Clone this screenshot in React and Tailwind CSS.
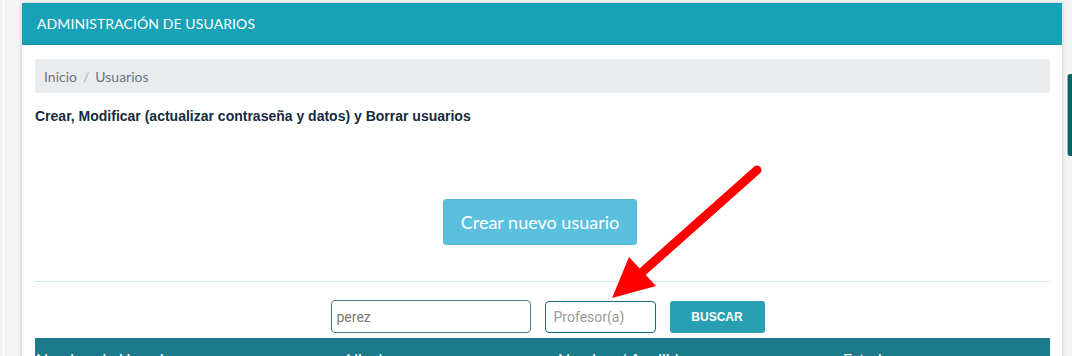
import React from 'react';

const columns = [
  { label: 'Nombre de Usuario', width: 'w-[310px]' },
  { label: 'Nivel', width: 'w-[212px]' },
  { label: 'Nombre / Apellido', width: 'w-[285px]' },
  { label: 'Estado', width: 'flex-1' },
];

const Arrow = () => (
  <svg
    className="absolute left-0 top-0 pointer-events-none"
    width="1072"
    height="356"
    viewBox="0 0 1072 356"
  >
    <line x1="757" y1="170" x2="640" y2="274" stroke="#ff0000" strokeWidth="9" strokeLinecap="round" />
    <polygon points="612,298 629,257 656,286" fill="#ff0000" />
  </svg>
);

const App = () => {
  return (
    <div className="relative h-[356px] w-[1072px] overflow-hidden bg-[#f4f4f4] font-['Lato',sans-serif]">
      <div className="absolute left-[3px] top-0 h-full w-px bg-white" />
      <div className="absolute right-0 top-[74px] h-[82px] w-[5px] rounded-l-[3px] border-l border-[#8fb9b9] bg-[#0b5f63]" />

      <div className="ml-[22px] mt-[3px] w-[1040px] bg-white shadow-[0_0_4px_rgba(0,0,0,0.18)]">
        {/* Card header */}
        <div className="flex h-[42px] items-center border-b border-[#148c9e] bg-[#18a2b8] px-[15px]">
          <h1 className="text-[14px] tracking-[0.1px] text-white">ADMINISTRACIÓN DE USUARIOS</h1>
        </div>

        <div className="px-[13px] pr-[12px] pt-[14px]">
          {/* Breadcrumb */}
          <div className="flex h-[34px] items-center rounded-[3px] bg-[#e9ecef] px-[9px] text-[14px] text-[#6c757d]">
            <span>Inicio</span>
            <span className="px-[6px] text-[#aab0b6]">/</span>
            <span>Usuarios</span>
          </div>

          <p className="mt-[15px] font-['Liberation_Sans',sans-serif] text-[14px] font-bold leading-[16px] text-[#142c3c]">
            Crear, Modificar (actualizar contraseña y datos) y Borrar usuarios
          </p>

          <div className="flex justify-center pt-[75px] pr-[5px]">
            <button className="h-[46px] w-[194px] rounded-[3px] border border-[#55b7d4] bg-[#5bc0de] text-[18px] text-white">
              Crear nuevo usuario
            </button>
          </div>

          <div className="mt-[36px] border-t border-dotted border-[#a6d2e2]" />

          {/* Search */}
          <div className="flex items-center justify-center gap-[14px] pl-[10px] pt-[18px] font-['Roboto',sans-serif]">
            <input
              defaultValue="perez"
              className="h-[33px] w-[200px] rounded-[4px] border border-[#4d7f8e] px-[5px] text-[14px] text-[#777] outline-none"
            />
            <input
              placeholder="Profesor(a)"
              className="h-[32px] w-[111px] rounded-[4px] border border-[#1c6b78] px-[8px] text-[14px] text-[#666] outline-none placeholder:text-[#9a9a9a]"
            />
            <button className="h-[32px] w-[95px] rounded-[3px] bg-[#289fb3] font-['Liberation_Sans',sans-serif] text-[12px] font-bold text-white">
              BUSCAR
            </button>
          </div>

          {/* Table header */}
          <div className="mt-[5px] flex h-[40px] bg-[#1d7a8a] px-[1px] pt-[9px] text-[16px] text-white">
            {columns.map((col) => (
              <div key={col.label} className={col.width}>
                {col.label}
              </div>
            ))}
          </div>
        </div>
      </div>

      <Arrow />
    </div>
  );
};

export default App;
